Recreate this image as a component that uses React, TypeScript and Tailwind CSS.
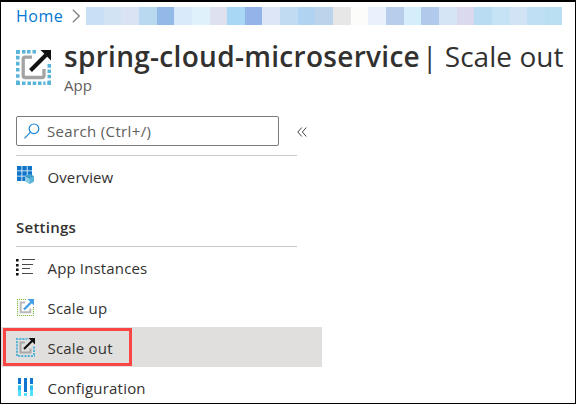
import React from "react";

const BLOCKS: [string, number][] = [
  ["#c8dff6", 18], ["#d2e4f3", 17], ["#dae3f3", 18], ["#b9d9f1", 18], ["#93b9e9", 17],
  ["#d9ebfb", 18], ["#dff1fa", 18], ["#dee1f0", 17], ["#a8d6f5", 18], ["#94b4e9", 17],
  ["#dde6f6", 18], ["#c1dbf3", 18], ["#b0d3f1", 17], ["#bcd3ec", 18], ["#e7e7e7", 18],
  ["#fcfdfb", 17], ["#e8f1fc", 18], ["#b8cdeb", 18], ["#d5eefb", 17], ["#b1caeb", 18],
  ["#d6e5f5", 18], ["#dad9ed", 17], ["#b9dcf2", 18], ["#c6e3f6", 18], ["#d1e3f5", 17],
  ["#bfdff5", 18], ["#badef2", 17],
];

function ScaleOutIcon({ size, frame = "#a3a3a3" }: { size: number; frame?: string }) {
  return (
    <svg width={size} height={size} viewBox="0 0 35 35" fill="none" className="shrink-0">
      <path
        d="M4 1.75H1.75V4M1.75 5.8v3.6M1.75 11.8v3.6M1.75 18v3.6M1.75 24.2v3.6M1.75 30.5v2.8H4M6 1.75h3.5M11 1.75h3.5M16.5 1.75h3.5M6 33.25h3.5M11.5 33.25h3.5M16.7 33.25h3.5M22 33.25h3.5M27.3 33.25h2.2M31.2 33.25h2.1V30.5M33.25 24.8v3.4M33.25 19.5v3.5M33.25 14v3.7"
        stroke="#59b4d9"
        strokeWidth="3.5"
      />
      <path d="M16 7.2H9Q7.2 7.2 7.2 9V25.5Q7.2 27.5 9 27.5H26Q28 27.5 28 25.5V19" stroke={frame} strokeWidth="3.3" />
      <path d="M14.5 20.5L30 5" stroke="#111" strokeWidth="4" />
      <path d="M24.5 0H35V10.5Z" fill="#111" />
    </svg>
  );
}

function SmallScaleOutIcon() {
  return (
    <svg width="19" height="19" viewBox="0 0 19 19" fill="none" className="shrink-0">
      <path d="M0 1H11.5M1 3V19M2 18H19M18 8.5V17" stroke="#59b4d9" strokeWidth="2" strokeDasharray="2.2 1" />
      <path d="M9 4.5H4.5V14.5H14.5V10.5" stroke="#a8a8a8" strokeWidth="2" />
      <path d="M8 11L16.5 2.5" stroke="#111" strokeWidth="2.2" />
      <path d="M12.5 0H19V6.5Z" fill="#111" />
    </svg>
  );
}

function ScaleUpIcon() {
  return (
    <svg width="17" height="19" viewBox="0 0 17 19" fill="none" className="ml-px">
      <path d="M.5 1V18M0 1.5H9M0 17.5H17M16.5 9V18" stroke="#86bc4a" strokeWidth="1.2" strokeDasharray="1.2 .8" />
      <path d="M8 4.5H3.7V14.3H13.3V10.5" stroke="#b9b9b9" strokeWidth="2" />
      <path d="M7 11.5L14.5 4" stroke="#459fe6" strokeWidth="2.4" />
      <path d="M10.5 1H17V7.5Z" fill="#459fe6" />
    </svg>
  );
}

function OverviewIcon() {
  return (
    <svg width="18" height="18" viewBox="0 0 18 18" className="mb-1 ml-px">
      <path d="M0 0h4.5v4.5H0zM5.3 0h4.5v4.5H5.3zM10.6 0H15v4.5h-4.4zM0 5.3h4.5v4.5H0zM5.3 5.3h4.5v4.5H5.3zM10.6 5.3H15v4.5h-4.4zM0 10.6h4.5V15H0zM5.3 10.6h4.5V15H5.3z" fill="#0f74ca" />
      <path d="M12.6 8L17 10.3V15.5L12.6 18L8 15.5V10.3Z" fill="#8ccbe6" />
      <path d="M12.6 8L17 10.3L12.6 12.7L8 10.3Z" fill="#3a9cc9" />
      <path d="M12.6 12.7L17 10.3V15.5L12.6 18Z" fill="#5bb2da" />
    </svg>
  );
}

function ListIcon() {
  return (
    <svg width="19" height="17" viewBox="0 0 19 17">
      <path d="M0 0h2.6v2.5H0zM0 5h2.6v2.5H0zM0 9.5h2.6V12H0zM0 14h2.6v2.5H0z" fill="#111" />
      <path d="M6 0h13v1H6zM6 5h11v1H6zM6 9h8v1H6zM6 14h11v1H6z" fill="#4a4a4a" />
    </svg>
  );
}

function ConfigIcon() {
  return (
    <svg width="15" height="18" viewBox="0 0 15 18" className="ml-[2px]">
      <path d="M0 7h3v11H0zM6 15h3v3H6zM12 7h3v11h-3z" fill="#50e0fb" />
      <path d="M0 0h3v6H0zM6 0h3v14H6zM12 0h3v6h-3z" fill="#0f75d0" />
      <path d="M0 8h3v4H0zM12 8h3v4h-3z" fill="#31bdec" />
    </svg>
  );
}

function Row({ icon, label, spacing, className = "" }: { icon: React.ReactNode; label: string; spacing: string; className?: string }) {
  return (
    <div className={`flex h-10 w-[321px] shrink-0 items-center pl-[15px] ${className}`}>
      <span className="flex w-[31.5px] shrink-0 items-center">{icon}</span>
      <span className={`whitespace-nowrap ${spacing}`}>{label}</span>
    </div>
  );
}

export default function App() {
  return (
    <div className="flex h-[404px] w-[576px] flex-col overflow-hidden border border-t-2 border-black bg-white font-['Open_Sans','Noto_Sans',sans-serif] text-[15px] leading-5 text-[#323130]">
      <nav className="flex h-[38px] shrink-0 items-start pl-[15px] pt-[5px]">
        <span className="w-[56px] text-base leading-[18px] tracking-[0.5px] text-[#0078d4]">Home</span>
        <svg width="8" height="14" viewBox="0 0 8 14" fill="none" className="mt-[2px] mr-[6px]">
          <path d="M.8 .8L7.2 7L.8 13.2" stroke="#858585" strokeWidth="1.3" />
        </svg>
        <div className="flex h-[18px]">
          {BLOCKS.map(([color, width], i) => (
            <span key={i} style={{ backgroundColor: color, width }} />
          ))}
        </div>
      </nav>
      <header className="flex h-[60px] shrink-0 pl-[15px]">
        <div className="mt-[10px] mr-[13px] w-[35px]"><ScaleOutIcon size={35} /></div>
        <div>
          <h1 className="flex h-8 items-center whitespace-nowrap text-[28px] leading-8">
            <span className="w-[358px] font-semibold tracking-[0.3px]">spring-cloud-microservice</span>
            <span className="tracking-[0.05px]">| Scale out</span>
          </h1>
          <p className="mt-[3px] text-[15px] leading-5 text-[#605e5c]">App</p>
        </div>
      </header>
      <div className="mt-4 flex h-[30px] shrink-0 items-center pl-[15px]">
        <div className="flex h-[30px] w-[263px] items-center rounded-[2px] border border-[#7d7b79] pl-[7px] text-[#605e5c]">
          <svg width="16" height="16" viewBox="0 0 16 16" fill="none" className="mr-[7px]">
            <circle cx="10" cy="5.8" r="4.8" stroke="#1684d7" strokeWidth="1.2" />
            <path d="M6.5 9.2L.5 15.3" stroke="#1684d7" strokeWidth="1.2" />
          </svg>
          <span className="tracking-[0.35px]">Search (Ctrl+/)</span>
        </div>
        <svg width="10" height="10" viewBox="0 0 10 10" fill="none" className="mt-px ml-[18px]">
          <path d="M4.8 .5L.8 5L4.8 9.5M9.3 .5L5.3 5L9.3 9.5" stroke="#444" strokeWidth="1" />
        </svg>
      </div>
      <div className="mt-[9px] ml-[15px] h-px w-[281px] shrink-0 bg-[#c8c8c8]" />
      <Row icon={<OverviewIcon />} label="Overview" spacing="tracking-[0.1px]" className="mt-px" />
      <div className="ml-[15px] flex h-[50px] w-[281px] shrink-0 items-end border-b border-[#c8c8c8] pb-[9px] font-semibold tracking-[0.25px]">Settings</div>
      <Row icon={<ListIcon />} label="App Instances" spacing="mt-[2px] tracking-[0.15px]" />
      <Row icon={<ScaleUpIcon />} label="Scale up" spacing="mt-[2px] tracking-[0.2px]" />
      <div className="relative shrink-0">
        <Row icon={<SmallScaleOutIcon />} label="Scale out" spacing="mt-[2px] tracking-[0.2px]" className="bg-[#e1dfdd]" />
        <span className="absolute left-[2px] top-px h-[38px] w-[129px] border-3 border-[#fa4545]" />
      </div>
      <Row icon={<ConfigIcon />} label="Configuration" spacing="mt-[2px] tracking-[0.2px]" />
    </div>
  );
}
